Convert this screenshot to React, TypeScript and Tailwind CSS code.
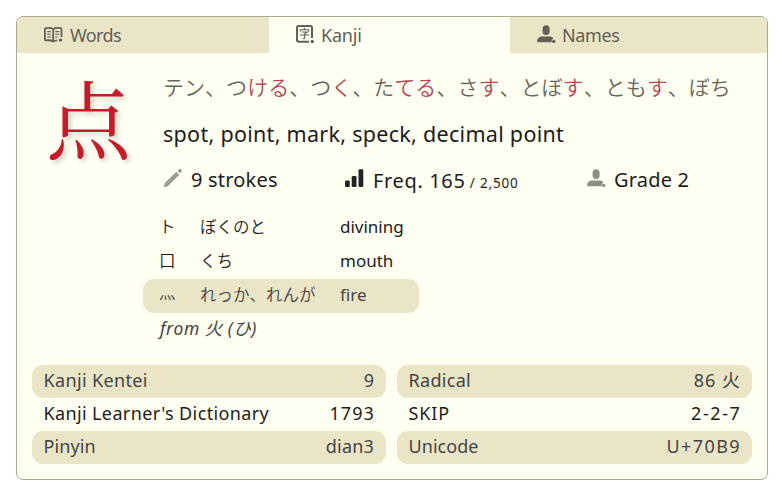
import React from 'react';

const sans = "font-['Noto_Sans','Noto_Sans_CJK_JP',sans-serif]";
const jp = "font-['Noto_Sans_CJK_JP',sans-serif] font-[350] [font-kerning:none]";

function PersonIcon({ className }: { className?: string }) {
  return (
    <svg width="19" height="19" viewBox="0 0 19 19" fill="currentColor" className={className}>
      <rect x="5.600" y="0.300" width="7" height="9.600" rx="3.500" />
      <path d="M.2 17.200v-1.200c0-2.800 2.200-4.600 4.800-4.600h8.200c1.800 0 2.800 1 3 2.600-1.200.3-1.800 1.400-1.500 3.200Z" />
      <circle cx="16.700" cy="16.400" r="1.700" />
    </svg>
  );
}

function BookIcon() {
  return (
    <svg width="19" height="16" viewBox="0 0 19 16" fill="none" stroke="currentColor" strokeWidth="1.8" className="-mt-px">
      <path d="M9.200 2.200C7.500.8 4.500.8 1.800 1.200c-.6 0-.9.4-.9 1v10.400c0 .6.4.9 1 .8 2.600-.3 5.500-.2 7.300 1 1.200-.7 2.400-1 4-1.100M9.200 2.200C11 .8 14 .8 16.600 1.200c.6 0 .9.4.9 1V10M9.200 2.200v12" />
      <path d="M3.200 4.600h3.600M3.200 7.300h3.600M3.200 10h3.600M11.300 4.600h4M11.300 7.300h4M11.300 10h2.500" strokeWidth="1.100" />
      <circle cx="16.500" cy="13.100" r="1.700" fill="currentColor" stroke="none" />
    </svg>
  );
}

function KanjiIcon() {
  return (
    <svg width="19" height="19" viewBox="0 0 19 19" fill="none" stroke="currentColor" strokeWidth="2" className="-mt-[2px]">
      <path d="M13 16.800H2.800c-1 0-1.800-.7-1.800-1.700V2.800C1 1.800 1.800 1 2.800 1h11.400c1 0 1.800.8 1.800 1.800V13" />
      <path d="M8.500 3v1.600M4.200 6.500V4.700h8.600v1.800M5.700 7h5.500L8.700 8.700v4c0 .7-.4 1-1.900.8M3.700 10h9.600" strokeWidth="1.100" />
      <circle cx="16.300" cy="16.500" r="1.700" fill="currentColor" stroke="none" />
    </svg>
  );
}

function PencilIcon() {
  return (
    <svg width="19" height="19" viewBox="0 0 19 19" fill="none" className="-mt-[3px] text-[#8d8d83]">
      <path d="M.8 18l1.200-4L13.300 2.900l2.800 2.800L4.800 17Z" fill="currentColor" />
      <path d="M3.200 15.600L14.200 4.800" stroke="#c3c3b8" strokeWidth="0.900" />
      <circle cx="16.900" cy="1.900" r="1.800" fill="currentColor" />
    </svg>
  );
}

function BarsIcon() {
  return (
    <svg width="19" height="19" viewBox="0 0 19 19" fill="#222" className="-mt-[3px]">
      <rect x="0" y="11.500" width="4.800" height="6.500" rx="1.300" />
      <rect x="6.700" y="7" width="4.800" height="11" rx="1.300" />
      <rect x="13.500" y="0.200" width="4.800" height="17.800" rx="1.300" />
    </svg>
  );
}

const readings: [string, string][] = [
  ['テン', ''], ['つ', 'ける'], ['つ', 'く'], ['た', 'てる'],
  ['さ', 'す'], ['とぼ', 'す'], ['とも', 'す'], ['ぼち', ''],
];

const components = [
  { glyph: 'ト', reading: 'ぼくのと', meaning: 'divining' },
  { glyph: '口', reading: 'くち', meaning: 'mouth' },
  { glyph: '灬', reading: 'れっか、れんが', meaning: 'fire' },
];

type Ref = { label: string; value: string; labelClass: string; valueClass: string };
const leftRefs: Ref[] = [
  { label: 'Kanji Kentei', value: '9', labelClass: 'tracking-[0.35px]', valueClass: '' },
  { label: "Kanji Learner's Dictionary", value: '1793', labelClass: 'tracking-[0.37px]', valueClass: 'tracking-[1.1px] -mr-px' },
  { label: 'Pinyin', value: 'dian3', labelClass: 'tracking-[0.1px]', valueClass: 'tracking-[0.2px]' },
];
const rightRefs: Ref[] = [
  { label: 'Radical', value: '86 火', labelClass: 'tracking-[0.3px]', valueClass: 'tracking-[1px] -mr-px' },
  { label: 'SKIP', value: '2-2-7', labelClass: 'tracking-[0.9px]', valueClass: 'tracking-[1.6px] -mr-[1.5px]' },
  { label: 'Unicode', value: 'U+70B9', labelClass: 'tracking-[0.05px]', valueClass: 'tracking-[1.4px] -mr-px' },
];

function RefTable({ rows, className }: { rows: Ref[]; className: string }) {
  return (
    <div className={className}>
      {rows.map((r, i) => (
        <div
          key={r.label}
          className={`flex h-[33px] justify-between rounded-[11px] pl-[11.500px] pr-3 text-[18px] leading-[30px] ${
            i % 2 === 0 ? 'bg-[#ebe5c8] text-[#444]' : 'text-[#1c1c1c]'
          }`}
        >
          <span className={r.labelClass}>{r.label}</span>
          <span className={r.valueClass}>{r.value}</span>
        </div>
      ))}
    </div>
  );
}

export default function App() {
  return (
    <div className={`h-[497px] w-[782px] bg-white pl-4 pt-4 ${sans}`}>
      <div className="h-[464px] w-[752px] overflow-hidden rounded-[7px] border border-[#abaa8c] bg-[#fffff2]">
        <div className="flex h-9 text-[18px] leading-[35px] text-[#655f56]">
          <div className="flex w-[252px] items-center bg-[#ebe5c8] pl-[27px]">
            <BookIcon />
            <span className="ml-[7px] tracking-[-0.6px]">Words</span>
          </div>
          <div className="flex w-[241px] items-center pl-[27px] text-[#5f6058]">
            <KanjiIcon />
            <span className="ml-[6px] tracking-[-0.2px]">Kanji</span>
          </div>
          <div className="flex flex-1 items-center bg-[#ebe5c8] pl-[27px]">
            <PersonIcon className="-mt-px" />
            <span className="ml-[6px] tracking-[-0.4px]">Names</span>
          </div>
        </div>

        <div className="flex h-[312px]">
          <div className="w-[126px] shrink-0 pl-[29px] pt-[21px] font-['Noto_Serif_CJK_JP','Noto_Sans_CJK_JP',serif] text-[85px] leading-[85px] text-[#c51b2a] [text-shadow:3px_3px_5px_rgba(0,0,0,0.18)]">
            点
          </div>
          <div className="flex-1">
            <div className={`ml-5 mt-[15px] h-9 whitespace-nowrap text-[21px] leading-9 tracking-[0.03px] text-[#666759] ${jp}`}>
              {readings.map(([stem, okuri], i) => (
                <React.Fragment key={i}>
                  {i > 0 && '、'}
                  {stem}
                  <span className="text-[#b34a58]">{okuri}</span>
                </React.Fragment>
              ))}
            </div>
            <div className="ml-5 mt-3 h-9 whitespace-nowrap text-[21.500px] leading-9 tracking-[0.29px] text-[#1c1c1c]">
              spot, point, mark, speck, decimal point
            </div>
            <div className="ml-5 mt-[10px] flex h-9 items-center whitespace-nowrap text-[20px] leading-9 text-[#1c1c1c]">
              <div className="flex w-[182px] items-center">
                <PencilIcon />
                <span className="ml-[9px] tracking-[0.2px]">9 strokes</span>
              </div>
              <div className="flex w-[242px] items-center">
                <BarsIcon />
                <span className="ml-[9px] flex h-9 items-baseline whitespace-pre pt-px leading-[35px] tracking-[0.65px]">
                  Freq. 165<span className="text-[13.500px] tracking-[0.8px]"> / 2,500</span>
                </span>
              </div>
              <div className="flex items-center">
                <PersonIcon className="-mt-[3px] text-[#8d8d83]" />
                <span className="ml-2 tracking-[0.2px]">Grade 2</span>
              </div>
            </div>
            <div className="mt-[13px] w-[276px] text-[16.500px]">
              {components.map((c, i) => (
                <div
                  key={c.glyph}
                  className={`grid h-[34px] grid-cols-[41px_140px_1fr] rounded-[11px] pl-4 leading-[30px] ${
                    i === 2 ? 'bg-[#ebe5c8] text-[#444]' : 'text-[#1c1c1c]'
                  }`}
                >
                  <span className={`${jp} ${i === 2 ? '-translate-y-0.5' : ''}`}>{c.glyph}</span>
                  <span className={`whitespace-nowrap ${jp}`}>{c.reading}</span>
                  <span className="text-[17px] leading-[31px]">{c.meaning}</span>
                </div>
              ))}
              <div className="h-[34px] pl-[17px] text-[17.500px] italic leading-[31px] tracking-[0.5px] text-[#444] [font-kerning:none]">
                from 火 (ひ)
              </div>
            </div>
          </div>
        </div>

        <div className="flex pl-[15px]">
          <RefTable rows={leftRefs} className="w-[354px]" />
          <RefTable rows={rightRefs} className="ml-[11px] w-[355px]" />
        </div>
      </div>
    </div>
  );
}
